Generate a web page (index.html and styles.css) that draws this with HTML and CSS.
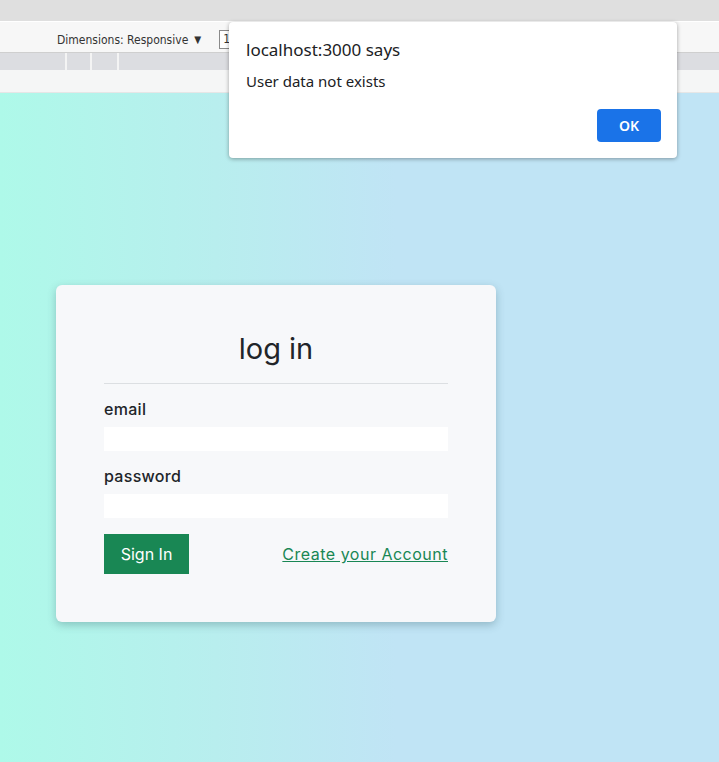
FILE: index.html
```html
<!DOCTYPE html>
<html>
<head>
<meta charset="utf-8">
<link rel="stylesheet" href="styles.css">
</head>
<body>
<header class="devtools">
  <div class="chrome-top"></div>
  <div class="toolbar">
    <span class="dims">Dimensions: Responsive <span class="caret">▼</span></span>
    <span class="size-box">1</span>
  </div>
  <div class="ruler">
    <span class="seg seg-a"></span>
    <span class="seg seg-b"></span>
    <span class="seg seg-c"></span>
  </div>
  <div class="subbar"></div>
</header>
<main class="viewport">
  <section class="card">
    <h1 class="title">log in</h1>
    <hr class="divider">
    <label class="label" for="email">email</label>
    <input class="field" id="email" type="text">
    <label class="label" for="password">password</label>
    <input class="field" id="password" type="password">
    <div class="actions">
      <button class="btn-signin">Sign In</button>
      <a class="create-link" href="#">Create your Account</a>
    </div>
  </section>
</main>
<div class="alert">
  <div class="alert-title">localhost:3000 says</div>
  <div class="alert-msg">User data not exists</div>
  <div class="alert-actions"><button class="alert-ok">OK</button></div>
</div>
</body>
</html>
```
FILE: styles.css
```css
html, body {
  margin: 0;
  padding: 0;
}
body {
  width: 719px;
  height: 762px;
  overflow: hidden;
  font-family: "Inter", "Open Sans", sans-serif;
  position: relative;
}
.devtools {
  display: flex;
  flex-direction: column;
}
.chrome-top {
  height: 21px;
  background: #dfdfdf;
  border-bottom: 1px solid #ffffff;
}
.toolbar {
  height: 31px;
  box-sizing: border-box;
  padding-top: 10px;
  background: #f7f7f7;
  border-bottom: 1px solid #cfcfcf;
  display: flex;
  align-items: flex-start;
  padding-left: 57px;
  font-family: "DejaVu Sans Condensed", "Liberation Sans Narrow", "Noto Sans", sans-serif;
  font-size: 12px;
  color: #333;
}
.dims {
  display: flex;
  align-items: center;
  gap: 4px;
  line-height: 16px;
}
.caret {
  font-size: 10px;
  margin-left: 2px;
}
.size-box {
  margin-left: 18px;
  margin-top: -2px;
  border: 1px solid #8a8a8a;
  height: 17px;
  width: 40px;
  padding-left: 3px;
  line-height: 17px;
  background: #fff;
}
.ruler {
  height: 17px;
  background: #dcdde1;
  display: flex;
}
.seg {
  width: 2px;
  background: #f4f4f4;
  height: 100%;
}
.seg-a { margin-left: 65px; }
.seg-b { margin-left: 23px; }
.seg-c { margin-left: 25px; }
.subbar {
  height: 22px;
  background: #f5f6f6;
  border-bottom: 1px solid #e6e6e6;
}
.viewport {
  height: 669px;
  background: linear-gradient(90deg, #aef9e9 0%, #b8eeee 30%, #c0e4f5 55%, #c0e4f5 100%);
  padding: 192px 0 0 56px;
  box-sizing: border-box;
}
.card {
  width: 440px;
  box-sizing: border-box;
  background: #f7f8fa;
  border-radius: 6px;
  box-shadow: 0 3px 8px rgba(40, 80, 90, 0.3);
  padding: 44px 48px 48px;
  display: flex;
  flex-direction: column;
  font-family: "Inter", "Open Sans", sans-serif;
  color: #212529;
}
.title {
  margin: 0;
  text-align: center;
  font-size: 29px;
  font-weight: 400;
  line-height: 40px;
}
.divider {
  border: 0;
  border-top: 1px solid #dcdfe2;
  margin: 14px 0 13px;
  width: 100%;
}
.label {
  font-size: 16px;
  font-weight: 500;
  line-height: 24px;
  margin-bottom: 6px;
  letter-spacing: 0.3px;
}
.field {
  border: 0;
  background: #ffffff;
  height: 24px;
  padding: 0;
  margin: 0 0 13px;
  width: 100%;
  outline: none;
}
.actions {
  display: flex;
  justify-content: space-between;
  align-items: center;
  margin-top: 3px;
}
.btn-signin {
  background: #198754;
  color: #ffffff;
  border: 0;
  width: 85px;
  height: 40px;
  font-family: "Inter", "Open Sans", sans-serif;
  font-size: 16px;
  padding: 0;
}
.create-link {
  color: #198754;
  font-size: 16px;
  letter-spacing: 0.5px;
  text-decoration: underline;
}
.alert {
  position: absolute;
  top: 22px;
  left: 229px;
  width: 448px;
  height: 136px;
  box-sizing: border-box;
  background: #ffffff;
  border-radius: 4px;
  box-shadow: 0 1px 4px rgba(0, 0, 0, 0.35);
  padding: 16px 16px 16px 17px;
  font-family: "Noto Sans", sans-serif;
  color: #202124;
}
.alert-title {
  font-size: 17px;
  line-height: 24px;
}
.alert-msg {
  font-size: 15px;
  line-height: 20px;
  margin-top: 9px;
}
.alert-actions {
  display: flex;
  justify-content: flex-end;
  margin-top: 18px;
}
.alert-ok {
  width: 64px;
  height: 33px;
  border: 0;
  border-radius: 4px;
  background: #1a73e8;
  color: #ffffff;
  font-family: "Noto Sans", sans-serif;
  font-weight: 600;
  font-size: 14px;
}
```
